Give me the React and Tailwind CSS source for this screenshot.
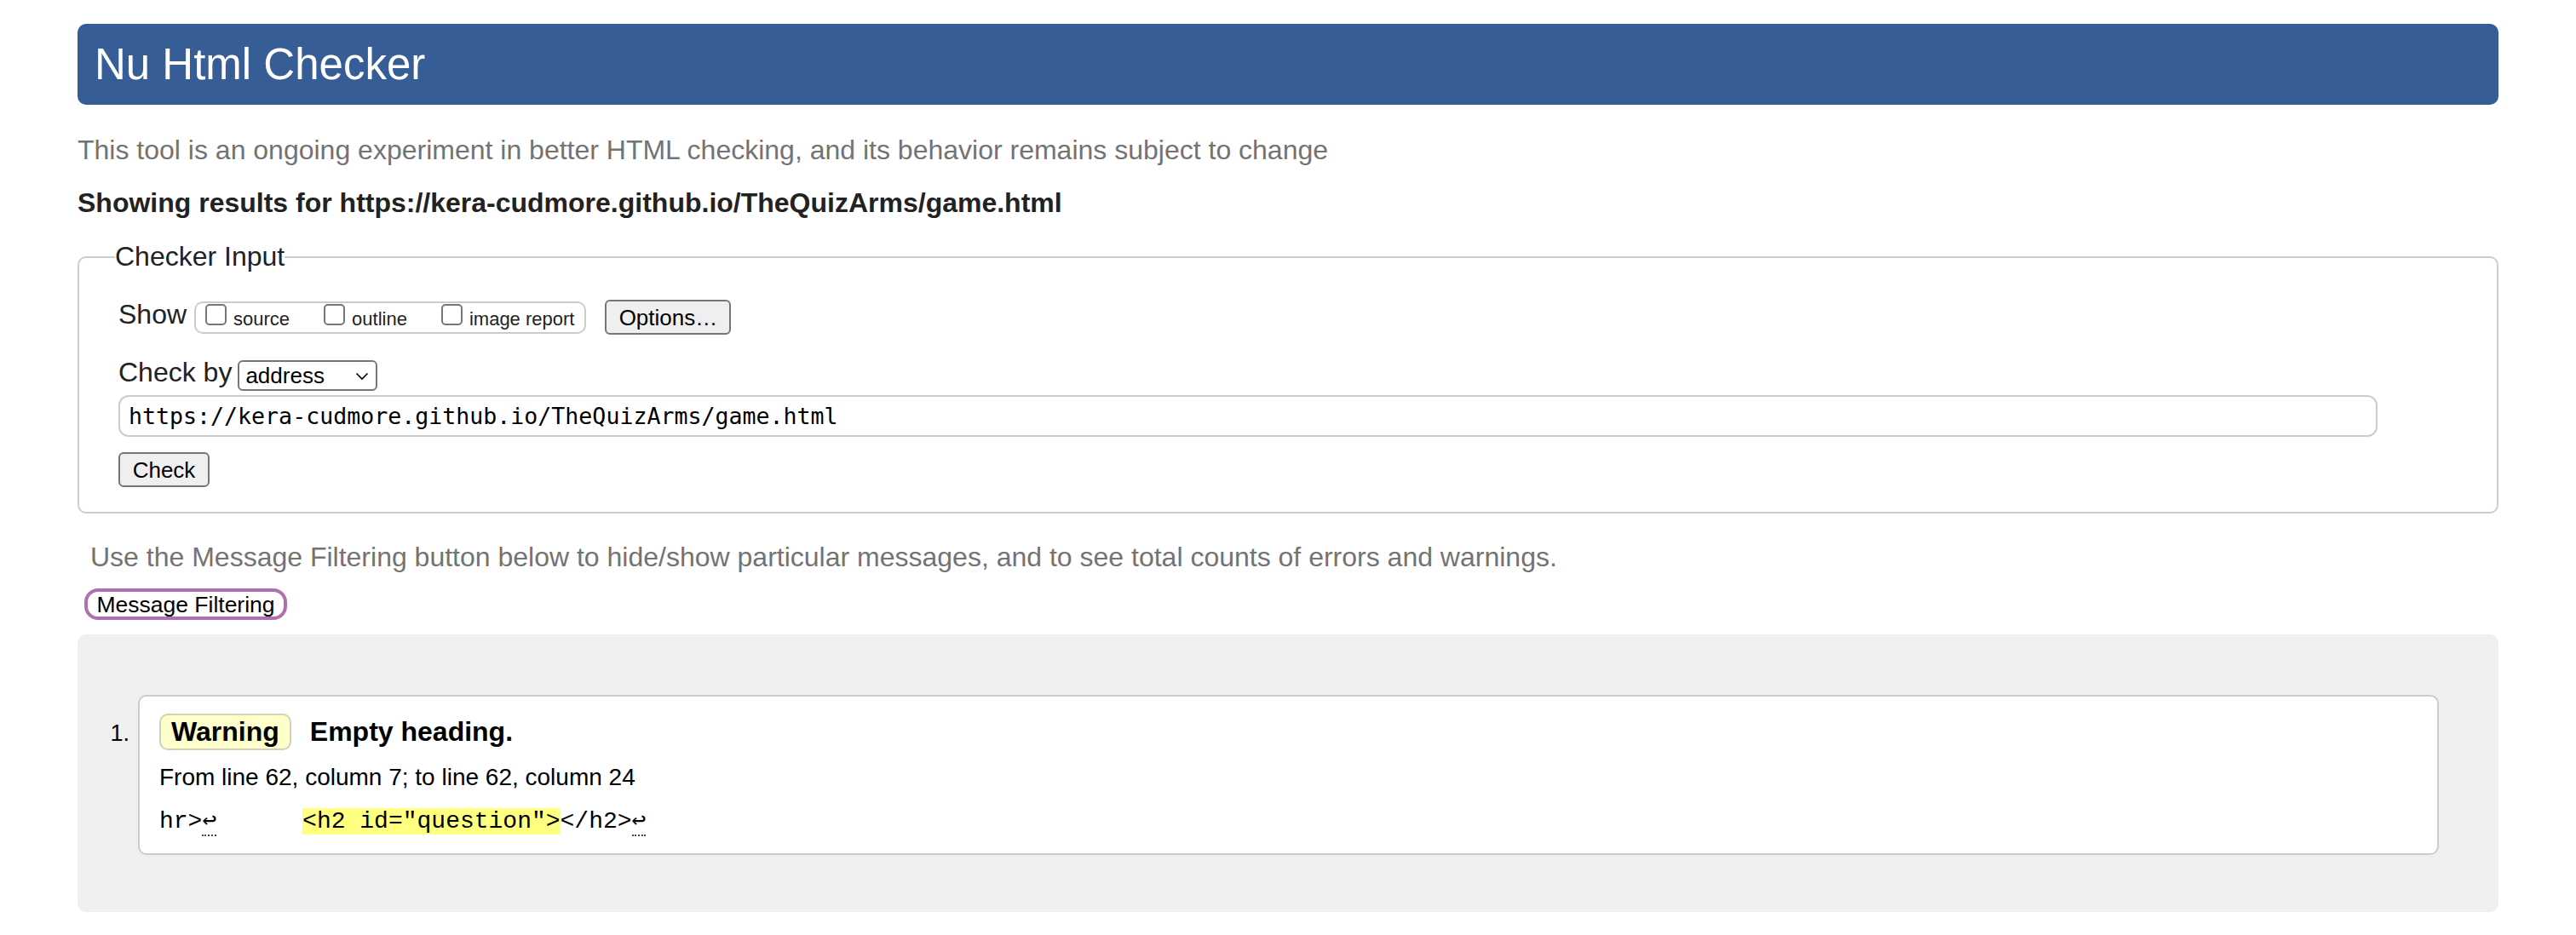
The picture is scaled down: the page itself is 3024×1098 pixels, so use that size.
import React from "react";

function Box() {
  return <span className="inline-block w-[25px] h-[25px] border-2 border-[#767676] rounded-[5px] bg-white shrink-0" />;
}

export default function App() {
  return (
    <div className="min-h-screen bg-white px-[91px] pt-[28px] pb-[30px] font-['Liberation_Sans',Arial,sans-serif] text-[#222]">
      <header className="h-[95px] rounded-[10px] bg-[#365d95] pl-[20px] flex items-center">
        <h1 className="text-[51px] leading-[58px] text-white font-normal">Nu Html Checker</h1>
      </header>

      <p className="mt-[35px] text-[32px] leading-[36px] text-[#737373]">
        This tool is an ongoing experiment in better HTML checking, and its behavior remains subject to change
      </p>

      <p className="mt-[26px] text-[32px] leading-[37px] font-bold text-[#222]">
        Showing results for https://kera-cudmore.github.io/TheQuizArms/game.html
      </p>

      <fieldset className="mt-[26px] border-2 border-[#cccccc] rounded-[10px] pl-[46px] pt-[32px] pb-[29px]">
        <legend className="-ml-[4px] text-[32px] leading-[37px] text-[#222]">Checker Input</legend>

        <div className="flex items-center h-[41px]">
          <span className="text-[32px] leading-[37px] mb-[6px]">Show</span>
          <div className="ml-[9px] h-[38px] box-border border-2 border-[#cccccc] rounded-[10px] flex items-baseline pt-[1px] pl-[11px] pr-[12px]">
            <Box />
            <span className="ml-[8px] text-[22px] leading-[25px]">source</span>
            <span className="ml-[40px]"><Box /></span>
            <span className="ml-[8px] text-[22px] leading-[25px]">outline</span>
            <span className="ml-[40px]"><Box /></span>
            <span className="ml-[8px] text-[22px] leading-[25px]">image report</span>
          </div>
          <button className="ml-[22px] w-[148px] h-[41px] box-border border-2 border-[#767676] rounded-[6px] bg-[#efefef] text-[26px] leading-[30px] text-black flex items-center justify-center">
            Options…
          </button>
        </div>

        <div className="mt-[30px] flex items-center h-[36px]">
          <span className="text-[32px] leading-[37px] mb-[7px]">Check by</span>
          <div className="ml-[7px] w-[164px] h-[36px] box-border border-2 border-[#767676] rounded-[6px] bg-white flex items-center pl-[7px] pr-[8px] justify-between">
            <span className="text-[26px] leading-[30px] text-black">address</span>
            <svg width="16" height="10" viewBox="0 0 16 10" className="mt-[2px]">
              <path d="M1.5 1.5 L8 8 L14.5 1.5" fill="none" stroke="#000" strokeWidth="1.6" />
            </svg>
          </div>
        </div>

        <div className="mt-[5px] w-[2652px] h-[49px] box-border border-2 border-[#cccccc] rounded-[12px] bg-white flex items-center pl-[10px]">
          <span className="font-['DejaVu_Sans_Mono',monospace] text-[26.6px] leading-[34px] text-black">
            https://kera-cudmore.github.io/TheQuizArms/game.html
          </span>
        </div>

        <button className="mt-[18px] w-[107px] h-[41px] box-border border-2 border-[#767676] rounded-[6px] bg-[#efefef] text-[26px] leading-[30px] text-black flex items-center justify-center">
          Check
        </button>
      </fieldset>

      <p className="mt-[33px] ml-[15px] text-[32px] leading-[36px] text-[#737373]">
        Use the Message Filtering button below to hide/show particular messages, and to see total counts of errors and warnings.
      </p>

      <button className="mt-[19px] ml-[8px] w-[238px] h-[37px] box-border border-[4px] border-[#b06fb0] rounded-[16px] bg-white text-[26.5px] leading-[30px] text-black flex items-center justify-center">
        Message Filtering
      </button>

      <div className="mt-[17px] h-[326px] rounded-[10px] bg-[#efefef] pt-[71px] pr-[70px] flex items-start">
        <div className="w-[71px] shrink-0 pt-[30px] pr-[10px] text-right text-[27px] leading-[31px] text-black">1.</div>
        <div className="flex-1 h-[188px] box-border border-2 border-[#cccccc] rounded-[10px] bg-white pt-[20px] pl-[23px]">
          <div className="flex items-center">
            <span className="h-[43px] box-border px-[12px] border-2 border-[#d2d2b8] rounded-[10px] bg-[#ffffcc] flex items-center text-[32px] leading-[37px] font-bold text-black">
              Warning
            </span>
            <span className="ml-[22px] text-[32px] leading-[37px] font-bold text-black">Empty heading.</span>
          </div>
          <p className="mt-[16px] text-[28px] leading-[32px] text-black">
            From line 62, column 7; to line 62, column 24
          </p>
          <p className="mt-[20px] font-['Liberation_Mono',monospace] text-[28px] leading-[32px] text-black whitespace-pre">
            <span>hr&gt;</span>
            <span className="border-b-2 border-dotted border-[#444]">↩</span>
            <span>{"      "}</span>
            <span className="bg-[#ffff80]">&lt;h2 id="question"&gt;</span>
            <span>&lt;/h2&gt;</span>
            <span className="border-b-2 border-dotted border-[#444]">↩</span>
          </p>
        </div>
      </div>
    </div>
  );
}
